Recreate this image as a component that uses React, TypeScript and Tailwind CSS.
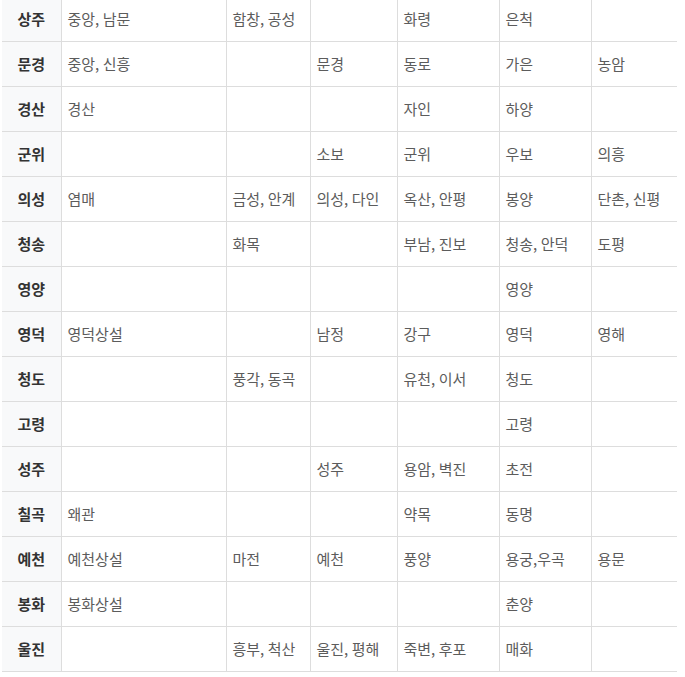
const rows: [string, string, string, string, string, string, string][] = [
  ["상주", "중앙, 남문", "함창, 공성", "", "화령", "은척", ""],
  ["문경", "중앙, 신흥", "", "문경", "동로", "가은", "농암"],
  ["경산", "경산", "", "", "자인", "하양", ""],
  ["군위", "", "", "소보", "군위", "우보", "의흥"],
  ["의성", "염매", "금성, 안계", "의성, 다인", "옥산, 안평", "봉양", "단촌, 신평"],
  ["청송", "", "화목", "", "부남, 진보", "청송, 안덕", "도평"],
  ["영양", "", "", "", "", "영양", ""],
  ["영덕", "영덕상설", "", "남정", "강구", "영덕", "영해"],
  ["청도", "", "풍각, 동곡", "", "유천, 이서", "청도", ""],
  ["고령", "", "", "", "", "고령", ""],
  ["성주", "", "", "성주", "용암, 벽진", "초전", ""],
  ["칠곡", "왜관", "", "", "약목", "동명", ""],
  ["예천", "예천상설", "마전", "예천", "풍양", "용궁,우곡", "용문"],
  ["봉화", "봉화상설", "", "", "", "춘양", ""],
  ["울진", "", "흥부, 척산", "울진, 평해", "죽변, 후포", "매화", ""],
];

const widths = ["w-[59px]", "w-[165px]", "w-[84px]", "w-[87px]", "w-[102px]", "w-[92px]", "w-[86px]"];

export default function App() {
  return (
    <div className="h-[677px] w-[685px] overflow-hidden bg-white pl-[2px] font-['Malgun_Gothic','Noto_Sans_CJK_KR',sans-serif]">
      <table className="-mt-[4px] w-[675px] table-fixed border-collapse text-[15px]">
        <colgroup>
          {widths.map((w, i) => (
            <col key={i} className={w} />
          ))}
        </colgroup>
        <tbody>
          {rows.map((r) => (
            <tr key={r[0]} className="h-[45px]">
              <th className="border-y border-r border-[#dddddd] bg-[#f8f9fa] p-0 text-center font-bold text-[#333333]">
                {r[0]}
              </th>
              {r.slice(1).map((c, i) => (
                <td
                  key={i}
                  className={`border-y border-[#dddddd] px-[6px] py-0 text-left text-[#5c5c5c] ${i < 5 ? "border-r" : ""}`}
                >
                  {c}
                </td>
              ))}
            </tr>
          ))}
        </tbody>
      </table>
    </div>
  );
}
